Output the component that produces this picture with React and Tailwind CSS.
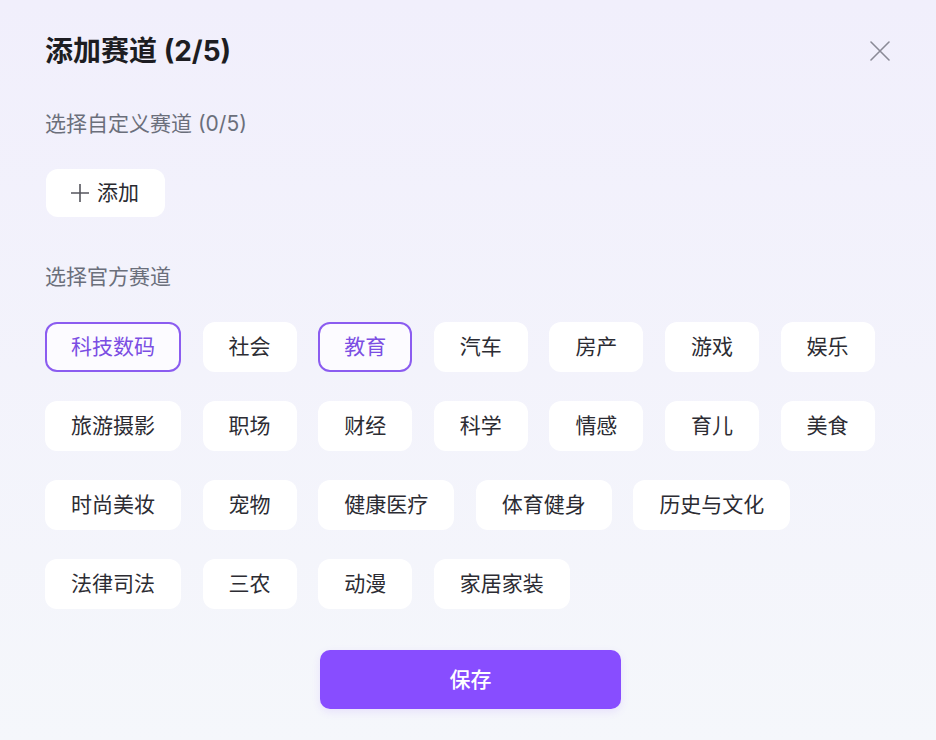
import { useState } from "react"

const official = [
  "科技数码", "社会", "教育", "汽车", "房产", "游戏", "娱乐",
  "旅游摄影", "职场", "财经", "科学", "情感", "育儿", "美食",
  "时尚美妆", "宠物", "健康医疗", "体育健身", "历史与文化",
  "法律司法", "三农", "动漫", "家居家装",
]

const font = { fontFamily: '"Inter", "Noto Sans CJK SC", sans-serif' }

const App = () => {
  const [selected, setSelected] = useState(["科技数码", "教育"])

  const toggle = (name) => {
    setSelected((s) => (s.includes(name) ? s.filter((x) => x !== name) : [...s, name]))
  }

  return (
    <div style={font} className="min-h-[740px] w-full bg-gradient-to-b from-[#f1effc] to-[#f5f7fb] pl-[45px] pr-[46px] pt-[33px] text-[#222228]">
      {/* header */}
      <div className="flex items-center justify-between">
        <h1 className="text-[28px] leading-[36px] font-bold text-[#1d1d22]">
          添加赛道 ({selected.length}/5)
        </h1>
        <button className="flex h-[20px] w-[20px] items-center justify-center text-[#8a8a96]">
          <svg width="20" height="20" viewBox="0 0 20 20" fill="none" stroke="currentColor" strokeWidth="1.6" strokeLinecap="round">
            <path d="M1 1L19 19M19 1L1 19" />
          </svg>
        </button>
      </div>

      {/* custom */}
      <p className="mt-[40px] text-[21px] leading-[30px] text-[#6b6f7b]">选择自定义赛道 (0/5)</p>
      <button className="mt-[30px] ml-[1px] flex h-[48px] items-center gap-[8px] rounded-[12px] bg-white pl-[25px] pr-[26px] text-[21px] text-[#2a2a30]">
        <svg width="18" height="18" viewBox="0 0 18 18" fill="none" stroke="#55555d" strokeWidth="1.6">
          <path d="M9 0V18M0 9H18" />
        </svg>
        添加
      </button>

      {/* official */}
      <p className="mt-[45px] text-[21px] leading-[30px] text-[#6b6f7b]">选择官方赛道</p>
      <div className="mt-[30px] flex flex-wrap gap-x-[21.6px] gap-y-[29px]">
        {official.map((name) => {
          const on = selected.includes(name)
          return (
            <button
              key={name}
              onClick={() => toggle(name)}
              className={
                on
                  ? "rounded-[12px] border-2 border-[#8b5cf0] bg-[#fcfbff] px-[24px] py-[8px] text-[21px] leading-[30px] text-[#7b4ee3]"
                  : "rounded-[12px] border-2 border-transparent bg-white px-[24px] py-[8px] text-[21px] leading-[30px] text-[#2c2c33]"
              }
            >
              {name}
            </button>
          )
        })}
      </div>

      <div className="mt-[41px] flex justify-center">
        <button className="ml-[6px] h-[59px] w-[301px] rounded-[10px] bg-[#884dff] text-[21px] font-medium text-white shadow-[0_3px_8px_rgba(136,77,255,0.12)]">
          保存
        </button>
      </div>
    </div>
  )
}

export default App
